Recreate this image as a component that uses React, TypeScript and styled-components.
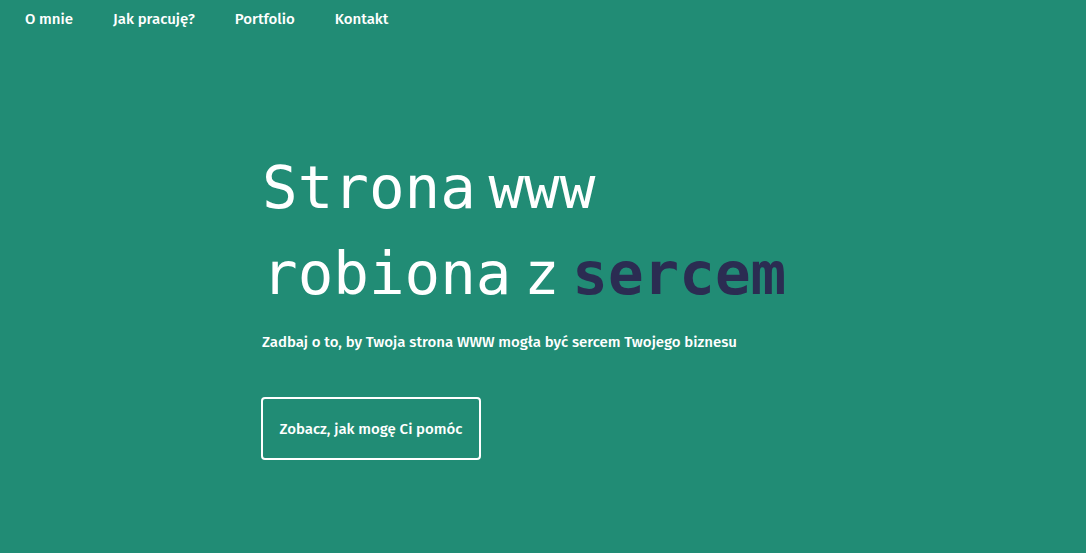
import React from "react";
import styled, { createGlobalStyle } from "styled-components";

const Global = createGlobalStyle`
  html, body { margin: 0; padding: 0; background: #218c75; }
  body { font-family: "Fira Sans", Roboto, "Noto Sans", sans-serif; color: #fff; }
`;

const Page = styled.div`
  min-height: 553px;
  background: #218c75;
  display: flex;
  flex-direction: column;
`;

const Nav = styled.nav`
  display: flex;
  gap: 40px;
  padding: 9px 25px 0;
  height: 30px;
`;

const NavLink = styled.a`
  color: #fff;
  text-decoration: none;
  font-size: 15px;
  font-weight: 500;
  line-height: 20px;
`;

const Hero = styled.section`
  width: 562px;
  margin: 106px auto 0;
  display: flex;
  flex-direction: column;
  align-items: flex-start;
`;

const Title = styled.h1`
  margin: 0;
  font-family: "DejaVu Sans Mono", "Liberation Mono", monospace;
  font-weight: 400;
  font-size: 59.2px;
  line-height: 86px;
  word-spacing: -23px;
  letter-spacing: 0;
`;

const Accent = styled.span`
  color: #2b2c52;
  font-weight: 700;
`;

const Lead = styled.p`
  margin: 15px 0 0;
  font-size: 15px;
  font-weight: 500;
  line-height: 20px;
`;

const Button = styled.a`
  margin-top: 45px;
  margin-left: -1px;
  display: inline-flex;
  align-items: center;
  justify-content: center;
  box-sizing: border-box;
  width: 220px;
  height: 63px;
  border: 2px solid #fff;
  border-radius: 4px;
  color: #fff;
  font-size: 15px;
  font-weight: 500;
  text-decoration: none;
`;

export default function App() {
  return (
    <Page>
      <Global />
      <Nav>
        <NavLink href="#">O mnie</NavLink>
        <NavLink href="#">Jak pracuję?</NavLink>
        <NavLink href="#">Portfolio</NavLink>
        <NavLink href="#">Kontakt</NavLink>
      </Nav>
      <Hero>
        <Title>
          Strona www
          <br />
          robiona z <Accent>sercem</Accent>
        </Title>
        <Lead>Zadbaj o to, by Twoja strona WWW mogła być sercem Twojego biznesu</Lead>
        <Button href="#">Zobacz, jak mogę Ci pomóc</Button>
      </Hero>
    </Page>
  );
}
